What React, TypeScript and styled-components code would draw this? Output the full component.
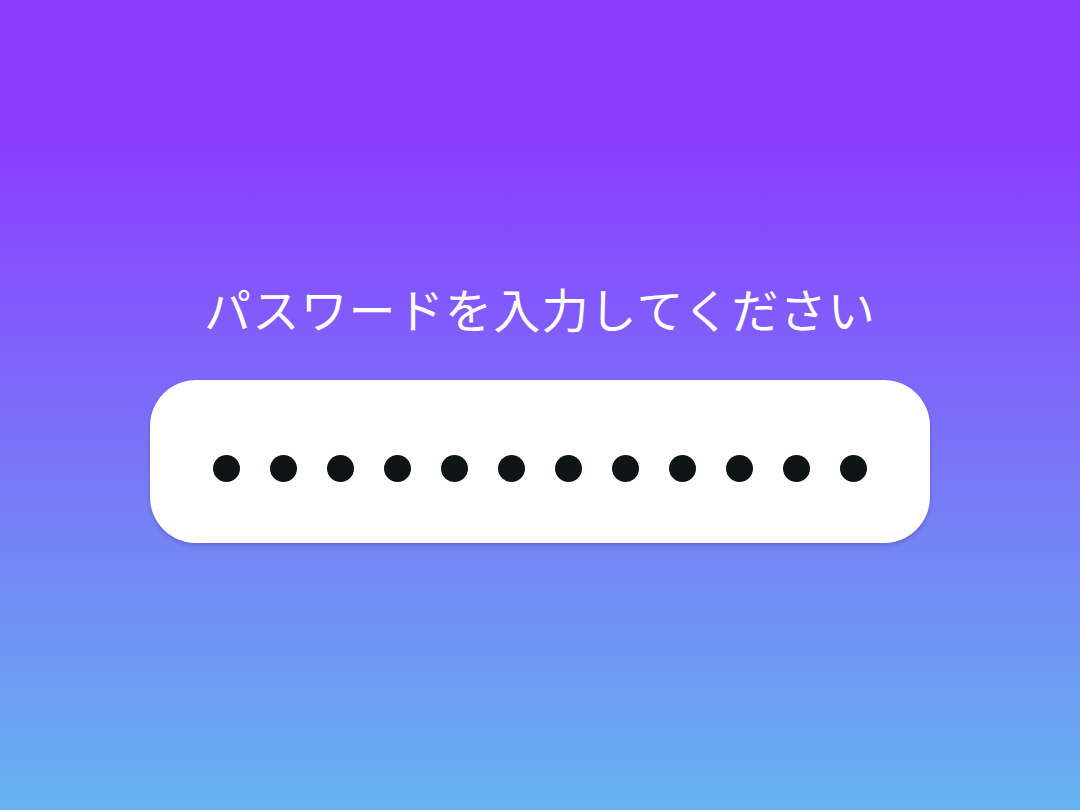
import React from "react";
import styled, { createGlobalStyle } from "styled-components";

const Global = createGlobalStyle`
  html, body { margin: 0; padding: 0; height: 100%; }
  #root { height: 100%; }
`;

const Page = styled.div`
  width: 1080px;
  height: 810px;
  background: linear-gradient(180deg, #8b3cff 0%, #8b3cff 17%, #66b3f0 100%);
  display: flex;
  flex-direction: column;
  align-items: center;
  justify-content: center;
  padding-top: 8px;
  box-sizing: border-box;
  font-family: "Noto Sans CJK JP", "Noto Sans", sans-serif;
`;

const Title = styled.h1`
  margin: 0 0 39px 0;
  font-size: 47px;
  font-weight: 400;
  line-height: 66px;
  color: #ffffff;
  letter-spacing: 1.2px;
`;

const Field = styled.div`
  width: 780px;
  height: 163px;
  background: #ffffff;
  border-radius: 46px;
  box-shadow: 0 2px 4px rgba(0, 0, 0, 0.18);
  display: flex;
  align-items: center;
  justify-content: center;
  gap: 30px;
  padding-top: 14px;
  box-sizing: border-box;
`;

const Dot = styled.span`
  width: 27px;
  height: 27px;
  border-radius: 50%;
  background: #0f1417;
`;

export default function App() {
  const dots = Array.from({ length: 12 });
  return (
    <>
      <Global />
      <Page>
        <Title>パスワードを入力してください</Title>
        <Field aria-label="password">
          {dots.map((_, i) => (
            <Dot key={i} />
          ))}
        </Field>
      </Page>
    </>
  );
}
